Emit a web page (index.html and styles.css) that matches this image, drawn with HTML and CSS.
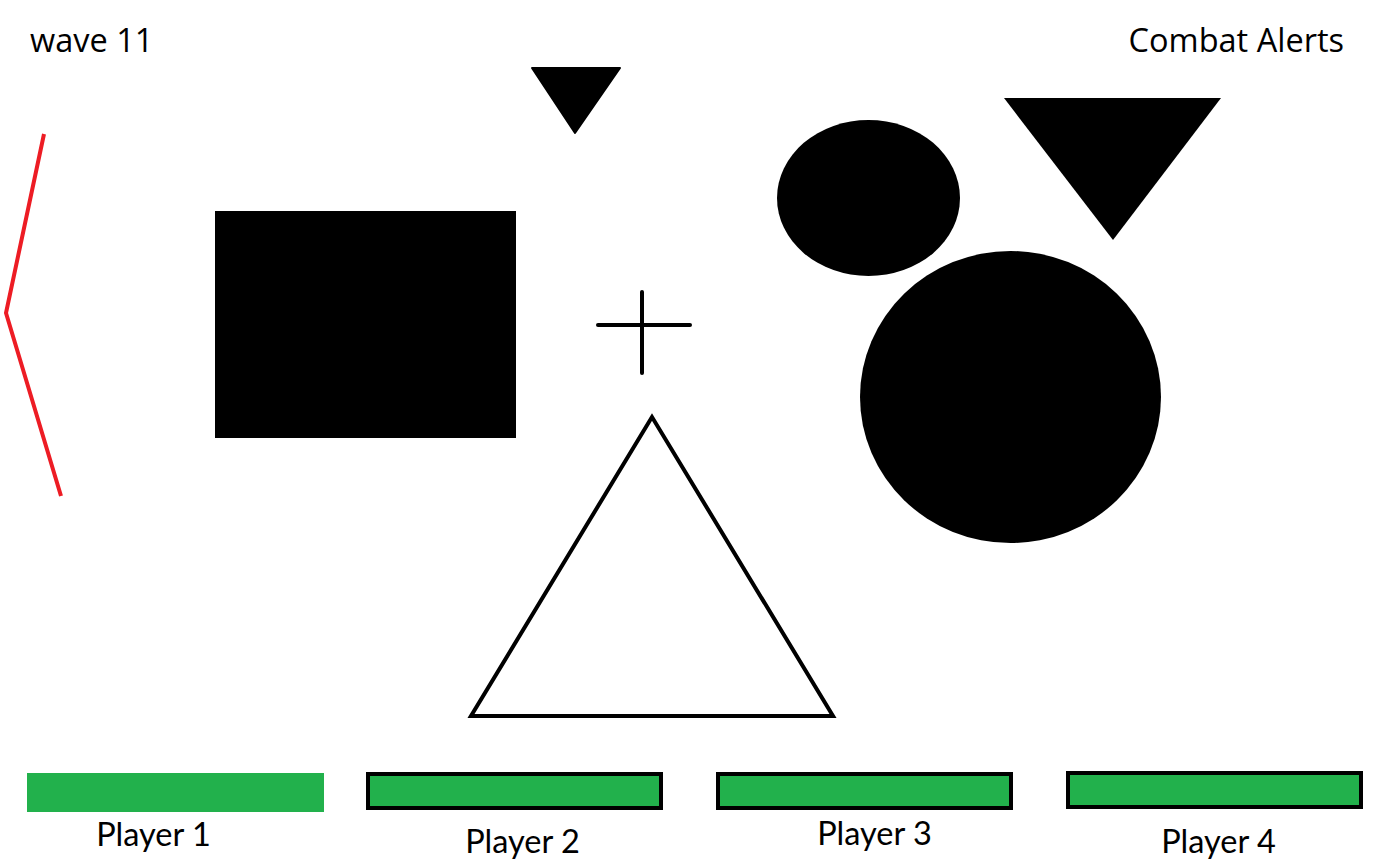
FILE: index.html
```html
<!DOCTYPE html>
<html>
<head>
<meta charset="utf-8">
<title>Wave 11</title>
<link rel="stylesheet" href="styles.css">
</head>
<body>
<div class="screen">
  <header class="hud-top">
    <div class="wave">wave 11</div>
    <div class="alerts">Combat Alerts</div>
  </header>
  <svg class="arena" viewBox="0 64 1397 700" width="1397" height="700" xmlns="http://www.w3.org/2000/svg">
    <polyline points="44,134 6,313 61,496" fill="none" stroke="#ed1c24" stroke-width="4" stroke-linejoin="miter"/>
    <rect x="215" y="211" width="301" height="227" fill="#000"/>
    <polygon points="532,68 620,68 575,133" fill="#000" stroke="#000" stroke-width="2" stroke-linejoin="round"/>
    <line x1="598" y1="325" x2="690" y2="325" stroke="#000" stroke-width="4" stroke-linecap="round"/>
    <line x1="642" y1="292" x2="642" y2="373" stroke="#000" stroke-width="4" stroke-linecap="round"/>
    <polygon points="652,417 471,716 833,716" fill="none" stroke="#000" stroke-width="4"/>
    <ellipse cx="868.5" cy="198" rx="91.5" ry="78" fill="#000"/>
    <polygon points="1004,98 1221,98 1113,240" fill="#000"/>
    <ellipse cx="1010.5" cy="397" rx="150.5" ry="146" fill="#000"/>
  </svg>
  <footer class="players">
    <div class="player p1">
      <div class="bar bar-plain"></div>
      <div class="name">Player 1</div>
    </div>
    <div class="player p2">
      <div class="bar bar-framed"></div>
      <div class="name">Player 2</div>
    </div>
    <div class="player p3">
      <div class="bar bar-framed"></div>
      <div class="name">Player 3</div>
    </div>
    <div class="player p4">
      <div class="bar bar-framed"></div>
      <div class="name">Player 4</div>
    </div>
  </footer>
</div>
</body>
</html>
```
FILE: styles.css
```css
html, body {
  margin: 0;
  padding: 0;
  background: #fff;
}
.screen {
  width: 1397px;
  height: 868px;
  overflow: hidden;
  background: #fff;
  color: #000;
  display: flex;
  flex-direction: column;
}
.hud-top {
  height: 64px;
  display: flex;
  justify-content: space-between;
  align-items: flex-start;
  padding: 0 53px 0 30px;
  font-family: "Open Sans", "Noto Sans", sans-serif;
  font-size: 32.5px;
  line-height: 1;
}
.wave, .alerts {
  padding-top: 24px;
}
.arena {
  display: block;
  width: 1397px;
  height: 700px;
  flex: none;
}
.players {
  display: flex;
  align-items: flex-start;
  padding-left: 27px;
  padding-top: 9px;
}
.player {
  display: flex;
  flex-direction: column;
  width: 297px;
}
.bar {
  box-sizing: border-box;
  width: 297px;
  height: 39px;
  background: #22b14c;
}
.bar-framed {
  height: 38px;
  border: 4px solid #000;
}
.name {
  font-family: "Lato", "Open Sans", sans-serif;
  font-size: 32.5px;
  line-height: 1;
  text-align: center;
}
.p1 .name { margin: 6px 0 0 -44px; }
.p2 { margin-left: 42px; margin-top: -1px; }
.p2 .name { margin: 15px 0 0 16px; }
.p3 { margin-left: 53px; margin-top: -1px; }
.p3 .name { margin: 7px 0 0 20px; }
.p4 { margin-left: 53px; margin-top: -2px; }
.p4 .name { margin: 16px 0 0 8px; }
```
